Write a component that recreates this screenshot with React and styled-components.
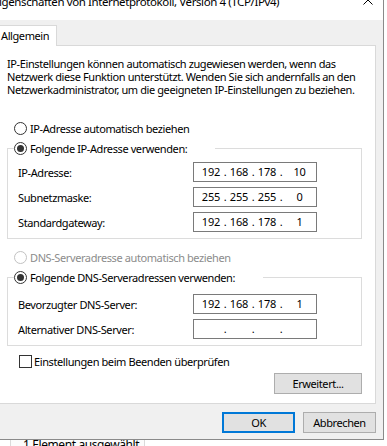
import React from "react";
import styled, { createGlobalStyle, css } from "styled-components";

const GlobalStyle = createGlobalStyle`
  html, body {
    margin: 0;
    padding: 0;
    background: #ffffff;
  }
  body {
    font-family: "Noto Sans", "Liberation Sans", sans-serif;
    font-size: 11px;
    letter-spacing: -0.4px;
    color: #000000;
    overflow: hidden;
  }
`;

const Desktop = styled.div`
  position: relative;
  width: 387px;
  height: 446px;
  overflow: hidden;
  background: #ffffff;
`;

// explorer window lying behind the dialog
const ExplorerPane = styled.div`
  position: absolute;
  left: 10px;
  top: 428px;
  width: 135px;
  height: 30px;
  box-sizing: border-box;
  padding: 9px 0 0 12px;
  border-left: 1px solid #dadada;
  border-right: 1px solid #dadada;
  background: #fbfbfb;
  font-size: 12px;
  line-height: 16px;
  white-space: nowrap;
`;

const Dialog = styled.div`
  position: absolute;
  left: 0;
  top: 0;
  width: 384px;
  height: 440px;
  box-sizing: border-box;
  display: flex;
  flex-direction: column;
  background: #f0f0f0;
  border-right: 1px solid #8a8a8a;
  border-bottom: 1px solid #8a8a8a;
`;

const TitleBar = styled.div`
  display: flex;
  height: 20px;
  flex-shrink: 0;
  overflow: hidden;
  background: #ffffff;
`;

const Title = styled.div`
  flex: 1;
  margin: -6px 0 0 -7px;
  font-size: 11.5px;
  line-height: 16px;
  white-space: nowrap;
`;

const CloseIcon = styled.svg`
  align-self: flex-start;
  margin: -5px 10px 0 0;
`;

const TabStrip = styled.div`
  display: flex;
  padding-top: 5px;
  flex-shrink: 0;
`;

const Tab = styled.div`
  position: relative;
  z-index: 1;
  height: 20px;
  margin: 0 0 -1px -6px;
  padding: 0 7px 0 6px;
  border: 1px solid #d9d9d9;
  border-bottom: none;
  background: #ffffff;
  line-height: 19px;
`;

const Panel = styled.div`
  margin: 0 7px 0 -1px;
  padding: 0 13px 9px 7px;
  border: 1px solid #d9d9d9;
  background: #ffffff;
`;

const Intro = styled.p`
  margin: 11px 0 0;
  line-height: 13px;
  white-space: nowrap;
`;

const OptionRow = styled.label`
  display: flex;
  align-items: center;
  height: 16px;
  margin-top: ${(p) => p.$top || 0}px;
  padding-left: ${(p) => p.$indent || 7}px;
  color: ${(p) => (p.$disabled ? "#8c8c8c" : "#000000")};
`;

const RadioDot = styled.span`
  position: relative;
  width: 13px;
  height: 13px;
  box-sizing: border-box;
  margin-right: 3px;
  border-radius: 50%;
  border: 1px solid ${(p) => (p.$disabled ? "#c2c2c2" : "#333333")};
  background: #ffffff;
  flex-shrink: 0;
  ${(p) =>
    p.$checked &&
    css`
      &::after {
        content: "";
        position: absolute;
        left: 2px;
        top: 2px;
        width: 7px;
        height: 7px;
        border-radius: 50%;
        background: #333333;
      }
    `}
`;

const CheckBox = styled.span`
  width: 13px;
  height: 13px;
  box-sizing: border-box;
  margin-right: 2px;
  border: 1px solid #333333;
  background: #ffffff;
  flex-shrink: 0;
`;

const Group = styled.fieldset`
  min-inline-size: 0;
  margin: ${(p) => p.$top}px 0 0;
  padding: ${(p) => p.$padTop}px 0 6px 10px;
  border: 1px solid #dcdcdc;
`;

const Legend = styled.legend`
  display: flex;
  align-items: center;
  height: 16px;
  margin-left: -4px;
  padding: 0 28px 0 0;
`;

const FieldRow = styled.div`
  display: flex;
  align-items: center;
  height: 20px;
  & + & {
    margin-top: 5px;
  }
`;

const FieldLabel = styled.span`
  width: 175px;
  white-space: nowrap;
`;

const IpBox = styled.div`
  display: grid;
  grid-template-columns: 24px 4px 24px 4px 24px 4px 1fr;
  align-items: center;
  width: 124px;
  height: 20px;
  box-sizing: border-box;
  padding-left: 5px;
  border: 1px solid #7a7a7a;
  background: #ffffff;
  line-height: 18px;
  letter-spacing: -0.2px;
  text-align: center;
`;

const ButtonRow = styled.div`
  display: flex;
  justify-content: flex-end;
  gap: 8px;
  margin-top: ${(p) => p.$top}px;
`;

const Footer = styled(ButtonRow)`
  padding-right: 7px;
`;

const Button = styled.button`
  width: ${(p) => p.$width}px;
  height: 21px;
  box-sizing: border-box;
  padding: 0;
  font: inherit;
  letter-spacing: inherit;
  color: #000000;
  background: #e1e1e1;
  border: 1px solid #adadad;
  ${(p) =>
    p.$default &&
    css`
      border: 2px solid #0078d7;
    `}
`;

function IpField({ value }) {
  const parts = value ? value.split(".") : ["", "", "", ""];
  const cells = [];
  parts.forEach((part, i) => {
    cells.push(<span key={"p" + i}>{part}</span>);
    if (i < 3) cells.push(<span key={"d" + i}>.</span>);
  });
  return <IpBox>{cells}</IpBox>;
}

function Radio({ checked, disabled, children, top }) {
  return (
    <OptionRow $disabled={disabled} $top={top}>
      <RadioDot $checked={checked} $disabled={disabled} />
      {children}
    </OptionRow>
  );
}

export default function App() {
  return (
    <>
      <GlobalStyle />
      <Desktop>
        <ExplorerPane>1 Element ausgewählt</ExplorerPane>
        <Dialog>
          <TitleBar>
            <Title>Eigenschaften von Internetprotokoll, Version 4 (TCP/IPv4)</Title>
            <CloseIcon width="10" height="10" viewBox="0 0 10 10">
              <path d="M0.5 0.5 L9.5 9.5 M9.5 0.5 L0.5 9.5" stroke="#000" strokeWidth="1" />
            </CloseIcon>
          </TitleBar>
          <TabStrip>
            <Tab>Allgemein</Tab>
          </TabStrip>
          <Panel>
            <Intro>
              IP-Einstellungen können automatisch zugewiesen werden, wenn das
              <br />
              Netzwerk diese Funktion unterstützt. Wenden Sie sich andernfalls an den
              <br />
              Netzwerkadministrator, um die geeigneten IP-Einstellungen zu beziehen.
            </Intro>
            <Radio top={24}>IP-Adresse automatisch beziehen</Radio>
            <Group $top={4} $padTop={6}>
              <Legend>
                <RadioDot $checked />
                Folgende IP-Adresse verwenden:
              </Legend>
              <FieldRow>
                <FieldLabel>IP-Adresse:</FieldLabel>
                <IpField value="192.168.178.10" />
              </FieldRow>
              <FieldRow>
                <FieldLabel>Subnetzmaske:</FieldLabel>
                <IpField value="255.255.255.0" />
              </FieldRow>
              <FieldRow>
                <FieldLabel>Standardgateway:</FieldLabel>
                <IpField value="192.168.178.1" />
              </FieldRow>
            </Group>
            <Radio top={10} disabled>
              DNS-Serveradresse automatisch beziehen
            </Radio>
            <Group $top={4} $padTop={9}>
              <Legend>
                <RadioDot $checked />
                Folgende DNS-Serveradressen verwenden:
              </Legend>
              <FieldRow>
                <FieldLabel>Bevorzugter DNS-Server:</FieldLabel>
                <IpField value="192.168.178.1" />
              </FieldRow>
              <FieldRow>
                <FieldLabel>Alternativer DNS-Server:</FieldLabel>
                <IpField />
              </FieldRow>
            </Group>
            <OptionRow $top={7} $indent={12}>
              <CheckBox />
              Einstellungen beim Beenden überprüfen
            </OptionRow>
            <ButtonRow $top={4}>
              <Button $width={88}>Erweitert...</Button>
            </ButtonRow>
          </Panel>
          <Footer $top={8}>
            <Button $width={73} $default>
              OK
            </Button>
            <Button $width={73}>Abbrechen</Button>
          </Footer>
        </Dialog>
      </Desktop>
    </>
  );
}
